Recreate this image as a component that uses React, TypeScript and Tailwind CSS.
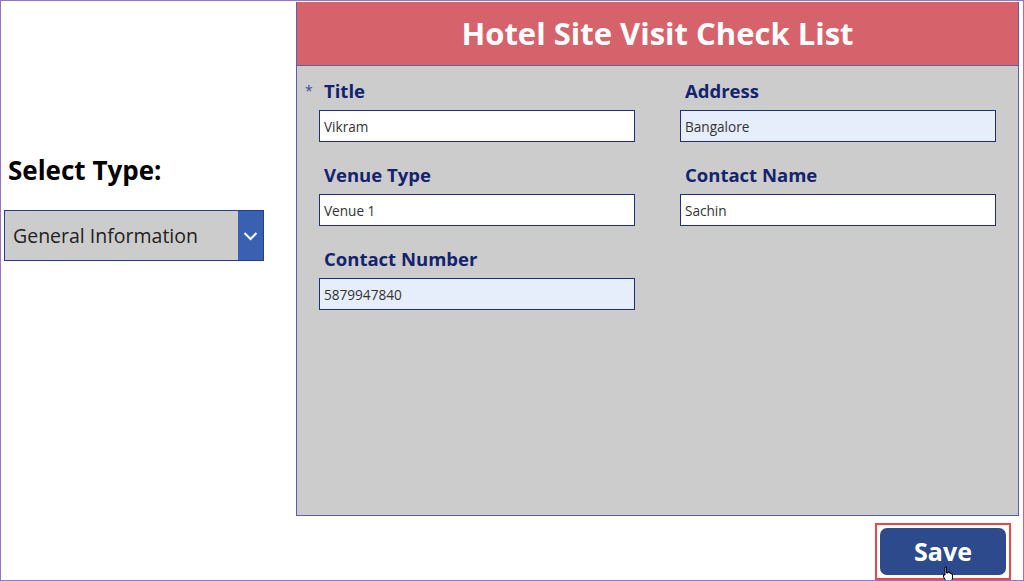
import React from "react";

const font = { fontFamily: '"Open Sans", "Noto Sans", sans-serif' };

function Field({ label, value, tint, required }: { label: string; value: string; tint?: boolean; required?: boolean }) {
  return (
    <div className="flex flex-col">
      <div className="relative h-[24px] mb-[7px] ml-[5px] text-[18.5px] leading-[24px] font-bold text-[#14236e]">
        {required && (
          <span className="absolute left-[-19px] top-[0px] text-[14px] font-normal text-[#3b4a9c]">*</span>
        )}
        {label}
      </div>
      <div
        className={`w-[316px] h-[32px] border-[1.5px] border-[#1f2f7c] flex items-center pl-[4px] pt-[2px] text-[13.6px] text-[#333333] ${
          tint ? "bg-[#e6edfb]" : "bg-white"
        }`}
      >
        {value}
      </div>
    </div>
  );
}

export default function App() {
  return (
    <div style={font} className="relative w-[1024px] h-[581px] border border-[#9b72c0] bg-white flex overflow-hidden">
      {/* Left column */}
      <div className="w-[295px] flex flex-col pt-[151px]">
        <div className="ml-[7px] h-[36px] text-[26px] leading-[36px] font-bold text-black">Select Type:</div>
        <div className="mt-[22px] ml-[3px] w-[260px] h-[51px] border border-[#2b3a8a] bg-[#cccccc] flex">
          <div className="flex-1 flex items-center pl-[8px] pt-[1px] text-[19.5px] text-[#222222]">General Information</div>
          <div className="w-[25px] bg-[#3a60b2] flex items-center justify-center">
            <svg width="15" height="10" viewBox="0 0 15 10" fill="none">
              <path d="M1.5 2 L7.5 8 L13.5 2" stroke="white" strokeWidth="2" />
            </svg>
          </div>
        </div>
      </div>

      {/* Right column */}
      <div className="flex flex-col pt-[1px]">
        <div className="w-[723px] h-[516px] border border-[#5a5fa6] border-t-0 flex flex-col">
          <div className="h-[64px] bg-[#d6626c] border-b border-[#5a5fa6] flex items-center justify-center text-white text-[31px] font-bold">
            Hotel Site Visit Check List
          </div>
          <div className="flex-1 bg-[#cccccc] pt-[13px] pl-[22px]">
            <div className="grid grid-cols-[361px_361px] gap-y-[21px]">
              <Field label="Title" value="Vikram" required />
              <Field label="Address" value="Bangalore" tint />
              <Field label="Venue Type" value="Venue 1" />
              <Field label="Contact Name" value="Sachin" />
              <Field label="Contact Number" value="5879947840" tint />
            </div>
          </div>
        </div>
        <div className="flex justify-end pr-[8px] mt-[7px]">
          <div className="relative border-2 border-[#e8474b] p-[3px]">
            <div className="w-[126px] h-[47px] rounded-[7px] bg-[#2d4a8c] flex items-center justify-center text-white text-[25px] font-bold">
              Save
            </div>
            <svg className="absolute left-[65px] top-[41px]" width="12" height="16" viewBox="0 0 12 16">
              <path
                d="M3 1 L4.5 1 L4.5 7 L6 7 L6 6 L7.5 6 L7.5 7 L9 7 L9 8 L10.5 8 L10.5 13 L9 15 L4 15 L1.5 11 L1.5 9 L3 9 Z"
                fill="white"
                stroke="black"
                strokeWidth="1"
              />
            </svg>
          </div>
        </div>
      </div>
    </div>
  );
}
